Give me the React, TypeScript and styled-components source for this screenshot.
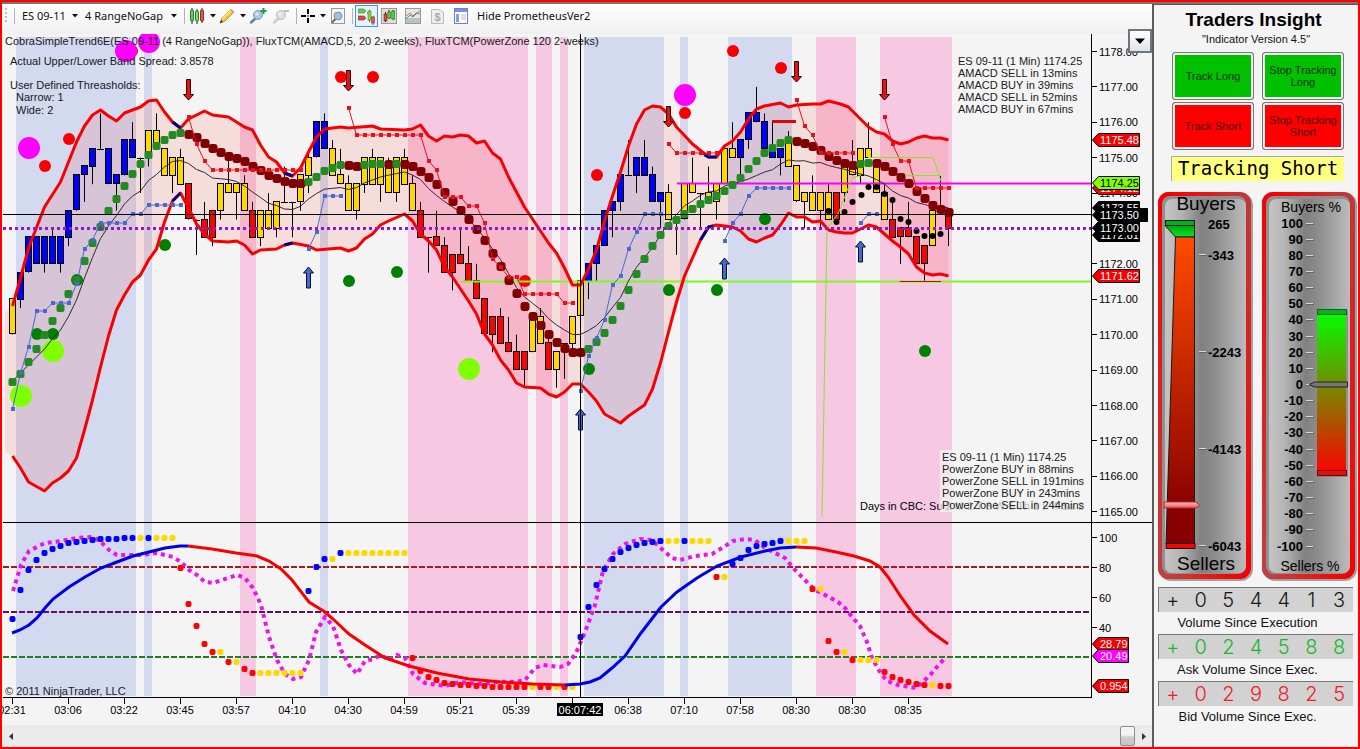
import React from 'react';
import styled, { createGlobalStyle } from 'styled-components';

const SANS = '"Liberation Sans", Arial, sans-serif';
const UI = '"Noto Sans", "Open Sans", sans-serif';

const GlobalStyle = createGlobalStyle`
  *, *::before, *::after { box-sizing: border-box; }
  body { margin: 0; background: #f4f4f4; font-family: ${SANS}; color: #111; }
  button, select { font: inherit; color: inherit; }
`;

/* ---------- page ---------- */

const Frame = styled.div`
  display: flex;
  flex-direction: column;
  border: 2px solid #f00;
`;
const TopEdge = styled.div`
  height: 2px;
  background: #7c7474;
`;
const Columns = styled.div`
  display: flex;
  align-items: stretch;
`;
const ChartColumn = styled.main`
  flex: 1;
  min-width: 0;
  display: flex;
  flex-direction: column;
`;

/* ---------- toolbar ---------- */

const Toolbar = styled.header`
  display: flex;
  align-items: center;
  height: 30px;
  padding: 0 0 6px 3px;
  background: linear-gradient(#fff, #f0f0f0);
  font: 11px/20px ${UI};
  white-space: nowrap;
`;
const Grip = styled.span`
  width: 2px;
  height: 16px;
  background: repeating-linear-gradient(#bbb 0 2px, transparent 2px 4px);
`;
const Divider = styled.span<{ $before: number; $after: number }>`
  width: 1px;
  height: 16px;
  margin: 0 ${(p) => p.$after}px 0 ${(p) => p.$before}px;
  background: #b4b4b4;
`;
const Picker = styled.label<{ $w: number }>`
  display: flex;
  align-items: center;
  width: ${(p) => p.$w}px;
  margin-right: 7px;
  select {
    appearance: none;
    flex: 1;
    min-width: 0;
    border: 0;
    padding: 0;
    background: none;
  }
`;
const ToolButton = styled.button<{ $active?: boolean; $gap?: number }>`
  display: flex;
  align-items: center;
  justify-content: center;
  gap: 5px;
  height: 22px;
  min-width: ${(p) => (p.$active ? 23 : 16)}px;
  margin-right: ${(p) => p.$gap ?? 8}px;
  padding: 0;
  border: ${(p) => (p.$active ? '1px solid #3c98e8' : '0')};
  background: ${(p) => (p.$active ? '#e4f1fc' : 'none')};
  svg { flex: none; }
`;

const Caret = () => (
  <svg width="6" height="4" viewBox="0 0 6 4" aria-hidden="true">
    <path d="M0 0h6L3 3.6z" fill="#111" />
  </svg>
);

const CandlesIcon = () => (
  <svg width="16" height="16" viewBox="0 0 16 16">
    <path d="M3 0v16M8 1v15M13 0v15" stroke="#222" />
    <rect x="1.500" y="2" width="3" height="11" rx="1" fill="#4ed64e" stroke="#14601a" strokeWidth=".8" />
    <rect x="6.500" y="3" width="3" height="10" rx="1" fill="#72e060" stroke="#14601a" strokeWidth=".8" />
    <rect x="11.500" y="2" width="3" height="11" rx="1" fill="#ee5448" stroke="#6e1410" strokeWidth=".8" />
  </svg>
);
const PencilIcon = () => (
  <svg width="16" height="16" viewBox="0 0 16 16">
    <path d="M1 15l2-5 9-9 3 3-9 9z" fill="#f2cb3c" stroke="#a07818" strokeWidth=".8" />
    <path d="M3 10l9-9 1 1-9 9z" fill="#fbe88c" />
    <path d="M11 2l1.500-1 3 3-1.500 1z" fill="#e79a86" />
    <path d="M1 15l1-3 2 2z" fill="#333" />
  </svg>
);
const LensIcon = ({ sign, dim }: { sign: string; dim?: boolean }) => (
  <svg width="17" height="16" viewBox="0 0 17 16">
    <path d="M1 14.500L6 10" stroke={dim ? '#ccc' : '#66809c'} strokeWidth="2.500" strokeLinecap="round" />
    <circle cx="8" cy="7" r="4.500" fill={dim ? '#dedede' : '#a9c7e0'} stroke={dim ? '#bbb' : '#7d9cb8'} />
    <circle cx="7" cy="6" r="1.800" fill={dim ? '#eee' : '#d8e9f5'} />
    {sign === '+' ? (
      <path d="M13.500 0v6M10.500 3h6" stroke="#14a050" strokeWidth="2" />
    ) : (
      <path d="M11 3h5" stroke="#aaa" strokeWidth="1.500" />
    )}
  </svg>
);
const CrosshairIcon = () => (
  <svg width="14" height="14" viewBox="0 0 14 14">
    <path d="M7 0v5M7 9v5M0 7h5M9 7h5M6.500 7h1" stroke="#000" strokeWidth="2" />
  </svg>
);
const PageLensIcon = () => (
  <svg width="16" height="16" viewBox="0 0 16 16">
    <rect x="1.500" y=".5" width="13" height="15" fill="#f4f4f4" stroke="#999" />
    <path d="M2 14.500l4-4" stroke="#666" strokeWidth="2" />
    <circle cx="8" cy="8" r="4" fill="#9fc0dc" stroke="#7796b0" />
  </svg>
);
const TraderIcon = () => (
  <svg width="17" height="17" viewBox="0 0 17 17">
    <path d="M0 1h6l2 2-2 2H0z" fill="#63cf4a" stroke="#3b8f2a" strokeWidth=".6" />
    <path d="M0 8h6l2 2-2 2H0z" fill="#d94b42" stroke="#8f2a24" strokeWidth=".6" />
    <path d="M11.500 2v12M9 5h2M15 8v9" stroke="#555" />
    <rect x="10" y="3" width="3" height="9" fill="#7edb3c" stroke="#3b8f2a" strokeWidth=".6" />
    <rect x="13.500" y="9" width="3" height="6" fill="#e05a50" stroke="#8f2a24" strokeWidth=".6" />
  </svg>
);
const BarsIcon = () => (
  <svg width="16" height="16" viewBox="0 0 16 16">
    <rect x=".5" y=".5" width="15" height="15" fill="#ddd" stroke="#999" />
    <path d="M4.500 4v10M8 2v9M12 2v10" stroke="#222" />
    <rect x="3" y="6" width="3" height="7" fill="#e04238" stroke="#611" strokeWidth=".5" />
    <rect x="6.800" y="4" width="3" height="6" fill="#54d03a" stroke="#161" strokeWidth=".5" />
    <rect x="10.800" y="3" width="3" height="8" fill="#54d03a" stroke="#161" strokeWidth=".5" />
  </svg>
);
const LinesIcon = () => (
  <svg width="16" height="16" viewBox="0 0 16 16">
    <rect x=".5" y=".5" width="15" height="15" fill="#e2e6e6" stroke="#999" />
    <rect x="1" y="10" width="14" height="5" fill="#bcc2c4" />
    <path d="M1 8l4-3 3 3 3-3 4 1" stroke="#d66" fill="none" />
    <path d="M1 11l4-4 3 2 4-4 3-2" stroke="#4a9a7a" fill="none" />
  </svg>
);
const DollarIcon = () => (
  <svg width="13" height="15" viewBox="0 0 13 15">
    <path d="M.5.500h8l4 3v11h-12z" fill="#eee" stroke="#bbb" />
    <text x="6.500" y="12" textAnchor="middle" fontFamily="Liberation Sans" fontWeight="700" fontSize="11" fill="#aaa">$</text>
  </svg>
);
const PropsIcon = () => (
  <svg width="14" height="16" viewBox="0 0 14 16">
    <rect x=".5" y=".5" width="13" height="15" fill="#fff" stroke="#6a80c8" />
    <rect x="1" y="1" width="12" height="3" fill="#7a90e0" />
    <rect x="2" y="6" width="3" height="8" fill="#8c9ce0" />
    <path d="M7 7h5M7 9h5M7 11h5" stroke="#bbc" />
  </svg>
);

/* ---------- chart data ---------- */

const xAt = (i: number) => 12.5 + 8 * i;
const tickY = (k: number) => 51.5 + 8.846 * k;

// [colour, high, top, bottom, low] in quarter-point ticks below 1178.00
type Candle = [string, number, number, number, number];
const candles: Candle[] = (
  'Y28,28,32,32 B25,25,28,29 B21,21,25,25 B21,21,24,24 B21,21,24,25 B20,21,24,24 B21,21,24,25 B18,18,21,22 B14,14,18,18 B13,13,14,17 ' +
  'B11,11,13,15 B7,11,11,11 B11,11,15,15 B14,14,15,18 B10,10,14,14 B8,10,12,12 B12,12,12,16 Y9,9,12,13 Y7,9,11,11 Y11,11,14,14 ' +
  'Y12,12,14,16 Y11,12,15,15 R15,15,19,19 R19,19,19,23 R17,19,21,21 R18,18,21,22 Y15,15,18,19 Y12,15,16,16 Y15,15,16,19 Y14,15,18,18 ' +
  'R17,18,21,21 Y18,18,21,22 Y16,18,20,20 Y17,17,20,21 Y13,17,17,17 Y17,17,17,21 Y14,14,17,18 Y11,12,14,16 B8,8,12,12 B7,8,11,11 ' +
  'Y10,11,14,14 Y11,14,15,15 Y14,15,18,18 Y15,15,18,19 Y12,12,15,16 Y11,12,15,15 Y12,12,15,17 Y12,13,16,16 Y12,12,16,17 Y11,12,15,15 ' +
  'Y14,15,18,18 R17,18,21,21 R21,21,21,25 R18,21,22,22 R21,22,25,25 R23,23,25,27 R20,23,24,24 R22,24,26,26 R24,26,28,28 R28,28,32,32 ' +
  'R30,30,32,34 R29,30,33,33 R30,33,34,34 R32,34,36,36 R34,34,36,38 Y30,30,34,34 Y29,30,33,33 R32,33,36,36 Y34,34,36,38 R33,33,33,37 ' +
  'Y30,30,33,34 Y26,26,30,30 B24,24,26,28 B22,22,24,26 B18,18,22,22 B17,17,18,21 B14,14,17,18 B10,14,14,14 B12,12,14,16 B10,12,14,14 ' +
  'B13,14,17,17 B16,16,17,20 Y15,16,19,19 Y19,19,19,23 Y15,15,19,19 Y12,15,16,16 Y16,16,16,20 Y13,16,17,17 Y15,15,17,19 Y11,11,15,15 ' +
  'Y8,11,12,12 B10,10,12,14 B7,7,10,11 B4,7,8,8 B7,8,11,11 B8,11,12,12 B11,11,12,14 Y9,10,13,13 Y13,13,17,17 Y16,16,17,20 ' +
  'Y14,16,18,18 Y16,16,18,20 Y15,16,19,19 R16,16,19,19 Y13,13,16,17 Y10,13,14,14 Y11,11,14,15 Y8,11,12,12 Y13,13,16,16 Y15,16,19,19 ' +
  'R17,19,21,21 R20,20,21,24 R17,20,21,21 R21,21,24,24 R22,22,24,26 Y18,18,22,22 R14,18,18,18 R18,18,20,22'
)
  .split(' ')
  .map((s) => [s[0], ...s.slice(1).split(',').map(Number)] as Candle);
const candleFill: Record<string, string> = { Y: '#ffd800', B: '#0202f4', R: '#f80404' };

const zones: [number, number, 'up' | 'down'][] = [
  [16, 136, 'up'], [144, 152, 'up'], [240, 256, 'down'], [320, 328, 'up'], [408, 528, 'down'], [536, 552, 'down'],
  [560, 568, 'down'], [584, 664, 'up'], [680, 688, 'up'], [728, 792, 'up'], [816, 856, 'down'], [880, 952, 'down'],
];

type Pt = [number, number];
const pts = (s: string): Pt[] => s.split(' ').map((p) => p.split(',').map(Number) as Pt);
const join = (p: Pt[]) => p.map((q) => q.join(',')).join(' ');

const upper = pts(
  '12.5,306 20.5,278 28.5,248 44.5,207 60.5,182 68.5,162 76.5,142 84.5,126 92.5,115 100.5,110 108.5,116 116.5,121 124.5,113 140.5,107 148.5,101 156.5,100 164.5,112 172.5,122 180.5,128 188.5,119 204.5,111 212.5,115 228.5,117 236.5,122 244.5,127 252.5,130 260.5,145 268.5,157 276.5,162 284.5,173 292.5,176 300.5,168 308.5,152 316.5,137 324.5,129 332.5,128 340.5,127 348.5,128 372.5,126 380.5,129 404.5,130 412.5,129 420.5,125 428.5,136 436.5,141 444.5,136 452.5,137 460.5,135 468.5,136 476.5,143 484.5,141 492.5,153 500.5,159 508.5,177 516.5,192 524.5,207 532.5,219 540.5,231 548.5,243 556.5,253 564.5,268 572.5,285 580.5,285 588.5,269 596.5,250 604.5,221 612.5,196 620.5,172 628.5,146 636.5,124 644.5,110 652.5,106 660.5,107 668.5,114 676.5,127 692.5,144 708.5,157 716.5,157 724.5,146 732.5,141 740.5,132 748.5,119 756.5,109 764.5,106 780.5,103 788.5,107 796.5,105 812.5,104 820.5,104 828.5,101 840.5,104 848.5,107 858.5,117 868.5,127 876.5,132 884.5,134 892.5,141 900.5,144 908.5,142 916.5,138 924.5,136 932.5,138 940.5,138 948.5,140'
);
const lower = pts(
  '12.5,456 20.5,468 28.5,482 44.5,491 52.5,483 60.5,478 68.5,471 76.5,458 84.5,430 92.5,400 100.5,367 108.5,336 116.5,310 124.5,295 132.5,282 140.5,275 148.5,260 156.5,249 164.5,222 172.5,201 180.5,193 188.5,208 196.5,224 204.5,234 212.5,241 228.5,242 236.5,241 244.5,245 252.5,254 260.5,250 276.5,249 284.5,245 292.5,243 308.5,246 316.5,250 340.5,248 348.5,251 356.5,248 364.5,239 372.5,234 380.5,225 388.5,221 404.5,214 412.5,221 420.5,234 428.5,241 436.5,250 444.5,267 452.5,277 460.5,289 468.5,301 476.5,314 484.5,334 492.5,345 500.5,360 508.5,370 516.5,383 524.5,387 540.5,388 548.5,394 556.5,397 564.5,392 572.5,384 580.5,384 588.5,392 596.5,401 604.5,414 620.5,423 628.5,416 644.5,405 652.5,389 660.5,363 668.5,332 676.5,302 684.5,276 692.5,258 700.5,240 708.5,227 716.5,225 732.5,227 740.5,231 748.5,239 756.5,242 764.5,238 772.5,235 780.5,225 788.5,213 796.5,217 804.5,217 812.5,222 820.5,221 828.5,230 836.5,232 844.5,233 852.5,233 860.5,229 868.5,225 876.5,227 892.5,241 900.5,247 908.5,254 916.5,267 924.5,273 932.5,275 940.5,274 948.5,276'
);
const valueAt = (line: Pt[], x: number) => {
  const n = line.findIndex((p) => p[0] >= x);
  if (n <= 0) return line[0][1];
  const [a, b] = [line[n - 1], line[n]];
  return a[1] + ((b[1] - a[1]) * (x - a[0])) / (b[0] - a[0]);
};
const middle: Pt[] = candles.map((_, i) => [xAt(i), (valueAt(upper, xAt(i)) + valueAt(lower, xAt(i))) / 2]);

const trend =
  'G382 374 362 349 335 321 308 294 280 261 243 227 211 199 186 174 164 155 146 140 135 133 D134 137 143 148 152 156 158 161 166 170 175 178 181 183 183 G182 177 171 168 165 D165 166 G165 164 164 D164 G164 D164 166 171 177 184 192 201 210 219 229 240 253 266 280 293 306 316 325 334 342 348 352 352 G349 342 333 320 306 290 274 259 246 235 226 220 214 209 204 200 196 191 185 178 169 161 153 148 143 140 D141 143 146 150 156 160 163 165 G164 163 D163 166 171 177 183 191 198 205 209 212';
const series = (s: string) => {
  let c = '';
  return s.split(' ').map((t) => {
    if (/[A-Z]/.test(t[0])) {
      c = t[0];
      return { c, y: Number(t.slice(1)) };
    }
    return { c, y: Number(t) };
  });
};

// [first bar, y of each bar]
const sellStops: [number, number[]][] = [
  [22, [117, 144, 161, 170, 170, 170, 170, 170, 170, 170, 170, 170, 170, 170, 170]],
  [42, [108, 135, 135, 135, 135, 135, 135, 135, 135, 135, 161, 170, 197, 197, 197, 206, 206, 223, 259, 267, 277, 277, 294, 294, 294, 294, 294, 303, 303]],
  [82, [144, 153, 153, 153, 153, 153, 153]],
  [98, [100, 126, 135, 153, 153, 153, 153, 153]],
  [109, [117, 144, 161, 161, 188, 188, 188, 188, 188]],
];
const buyStops: [number, number[]][] = [
  [0, [409, 373, 347, 311, 311, 303, 303, 303, 284, 249, 240, 223, 223, 223, 223, 214, 214, 205, 205, 205, 205, 205]],
  [37, [249, 232, 196, 196, 196]],
  [71, [391, 356, 338, 320, 285, 276, 249, 232, 214, 214, 214]],
  [89, [241, 223, 214, 196, 188, 188, 188, 188, 188]],
  [106, [223, 214, 214]],
];

const signals: [string, number, Pt[]][] = [
  ['#7fff00', 11, [[21, 396], [53, 351], [469, 369]]],
  ['#f80000', 6, [[69, 139], [45, 166], [132, 51], [341, 77], [373, 77], [597, 175], [525, 281], [733, 51], [781, 68], [685, 113]]],
  ['#ff00ff', 11, [[29, 148], [126, 51], [149, 42], [685, 95]]],
  ['#008000', 6, [[77, 280], [37, 334], [53, 334], [165, 245], [349, 281], [397, 272], [589, 369], [765, 219], [669, 290], [717, 290], [925, 351]]],
];
const blackDots = pts('828,211 836,222 844,212 852,202 861,195 868,187 876,187 884,194 892,200 900,219 908,222 916,231 924,236 932,236 940,234');
const sellArrows: Pt[] = [[188, 79], [348, 70], [668, 106], [796, 61], [884, 79]];
const buyArrows: Pt[] = [[308, 267], [580, 409], [724, 258], [860, 241]];

const oscillator =
  'B619 590 570 560 553 549 546 543 542 541 540 539 539 539 538 538 Y538 B538 Y538 538 538 R568 604 626 644 652 Y652 R662 Y662 R669 673 Y673 673 673 673 673 673 B591 567 559 Y559 B553 Y553 553 553 553 553 553 553 553 R658 671 677 680 683 684 685 685 686 686 687 687 687 687 687 Y687 R687 687 Y687 R687 Y687 B637 607 585 569 559 552 548 545 543 542 541 Y541 541 B541 Y541 541 541 R577 Y577 B564 558 550 546 544 543 541 Y541 541 541 R589 Y589 R641 652 Y652 R660 Y660 660 660 R672 677 680 682 684 685 Y685 R686 686';

const slow: [string, string][] = [
  ['#0000e8', '12,633 20,630 29,625 37,618 45,608 53,599 69,587 85,577 101,568 117,562 133,556 149,552 165,548 180,546 188,546'],
  ['#f80000', '188,546 212,549 236,553 257,556 269,561 281,569 292,580 309,602 325,612 333,619 349,634 365,645 385,658 409,666 437,673 469,679 501,682 533,684 565,685'],
  ['#0000e8', '565,685 580,684 590,682 600,678 612,668 625,656 641,633 661,607 677,592 697,578 717,566 741,557 765,551 780,548 796,547'],
  ['#f80000', '796,547 816,548 836,552 854,556 870,561 880,567 888,577 901,597 914,615 930,631 948,644'],
];
const fast =
  '13,591 21,565 29,551 45,543 61,541 77,538 93,537 101,542 109,550 117,555 140,555 157,553 173,557 181,562 189,570 197,575 205,582 213,583 237,575 245,578 253,588 261,605 269,637 277,660 285,674 293,679 301,677 309,660 316,632 325,617 333,626 341,650 349,665 357,674 365,661 373,659 381,655 389,660 397,655 405,658 413,674 425,683 445,686 460,682 480,684 498,682 515,682 525,680 535,668 543,665 560,667 568,664 576,653 585,632 595,605 603,571 613,554 625,544 640,539 652,540 664,551 672,558 680,560 695,556 712,554 722,548 733,541 745,539 755,540 765,548 775,553 785,558 795,570 805,580 815,590 829,597 838,602 845,608 853,618 860,626 867,642 872,658 880,672 887,681 898,685 916,688 925,680 932,673 940,663 946,658';

const times = ['02:31', '03:06', '03:22', '03:45', '03:57', '04:10', '04:30', '04:59', '05:21', '05:39', '', '06:38', '07:10', '07:58', '08:30', '08:30', '08:35'];

/* ---------- chart ---------- */

const ChartArea = styled.div`
  position: relative;
`;
const ChartSvg = styled.svg`
  display: block;
  width: 100%;
  height: auto;
  background: #f4f4f4;
  font: 11px ${SANS};
`;
const PanelToggle = styled.button`
  position: absolute;
  top: -5px;
  right: 0;
  display: flex;
  align-items: center;
  justify-content: center;
  width: 24px;
  height: 24px;
  padding: 0;
  border: 2px solid #70747c;
  background: linear-gradient(#fff, #e0e4e8);
`;

const Tag = ({ y, value, fill, color = '#fff', w = 47 }: { y: number; value: string; fill: string; color?: string; w?: number }) => (
  <g>
    <path d={`M1092.500 ${y}l6-6.500h${w - 6}v13h-${w - 6}z`} fill={fill} stroke="#000" />
    <text x="1100" y={y + 4} fill={color}>{value}</text>
  </g>
);

const Stops = ({ runs, color }: { runs: [number, number[]][]; color: string }) => (
  <>
    {runs.map(([start, ys]) => (
      <g key={start}>
        <polyline points={ys.map((y, n) => `${xAt(start + n)},${y}`).join(' ')} fill="none" stroke={color} />
        {ys.map((y, n) => (
          <rect key={n} x={xAt(start + n) - 1.5} y={y - 2} width="4" height="4" fill={color} />
        ))}
      </g>
    ))}
  </>
);

const Chart = () => (
  <ChartSvg viewBox="2 34 1150 691" role="img" aria-label="ES 09-11 price chart">
    <defs>
      <clipPath id="plot"><rect x="3" y="34" width="1089" height="664" /></clipPath>
    </defs>
    {zones.map(([a, b, kind]) => (
      <rect key={a} x={a} y="37" width={b - a} height="659" fill={kind === 'up' ? '#d3daf0' : '#f7c8e1'} />
    ))}

    <g clipPath="url(#plot)">
      <polygon points={`5,312 ${join(upper)} ${join([...lower].reverse())} 5,452`} fill="#ff1400" fillOpacity=".1" />

      {candles.map(([c, h, t, b, l], i) => {
        const x = xAt(i);
        return (
          <g key={i} stroke="#000">
            <path d={`M${x} ${tickY(h)}V${tickY(l)}`} />
            {t === b ? (
              <path d={`M${x - 3.5} ${Math.round(tickY(t)) + 0.5}h7`} />
            ) : (
              <rect x={x - 3} y={Math.round(tickY(t)) - 0.5} width="6" height={Math.round(tickY(b) - tickY(t))} fill={candleFill[c]} />
            )}
          </g>
        );
      })}

      {signals.map(([fill, r, list]) =>
        list.map(([x, y]) => <circle key={`${x}-${y}`} cx={x} cy={y} r={r} fill={fill} />)
      )}

      <path d="M677 183.500H1091" stroke="#f800f8" strokeWidth="2" />
      <path d="M461 281.500H1091" stroke="#80f820" strokeWidth="2" />
      <polyline points={join(middle)} fill="none" stroke="#302830" />

      <g fill="none" stroke="#f80000" strokeWidth="3" strokeLinejoin="round">
        <polyline points={join(upper)} />
        <polyline points={join(lower)} />
        <path d="M772 121.500H796" stroke="#d80808" />
      </g>
      <path
        d="M172.500 122L180.500 128M172.500 201L180.500 193M284.500 173L292.500 176M284.500 245L292.500 243M704.500 155L708.500 157H716.500M700.500 240L708.500 227L713 226"
        fill="none" stroke="#000080" strokeWidth="3"
      />
      <path d="M900 281.500H941" stroke="#b01010" />

      {series(trend).map(({ c, y }, i) =>
        c === 'G' ? (
          <rect key={i} x={xAt(i) - 4} y={y - 4} width="8" height="8" rx="2" fill="#228b22" />
        ) : (
          <rect key={i} x={xAt(i) - 4} y={y - 4} width="9" height="9" rx="3" fill="#800000" />
        )
      )}
      <Stops runs={sellStops} color="#e8101c" />
      <Stops runs={buyStops} color="#4c68cc" />
      {blackDots.map(([x, y]) => <circle key={x} cx={x + 0.5} cy={y} r="3" />)}
      <path d="M822 517L824 400L827 228L838 214L852 178L861 175.500M868 157.500H933L941 181M905 175.500H941" fill="none" stroke="#84e820" />

      {sellArrows.map(([x, y]) => (
        <path key={x} d={`M${x - 1.5} ${y + 0.5}h4v15h3l-5 5.500l-5-5.500h3z`} fill="#e81010" stroke="#200" />
      ))}
      {buyArrows.map(([x, y]) => (
        <path key={x} d={`M${x + 0.5} ${y}l5 6h-3v15h-4v-15h-3z`} fill="#4868c8" stroke="#001040" />
      ))}

      <path d="M3 567H1091" stroke="#a02020" strokeWidth="2" strokeDasharray="6 2" />
      <path d="M3 612H1091" stroke="#601060" strokeWidth="2" strokeDasharray="6 2" />
      <path d="M3 657H1091" stroke="#208020" strokeWidth="2" strokeDasharray="6 2" />
      <polyline points={fast} fill="none" stroke="#f010f0" strokeWidth="4" strokeDasharray="4 4" />
      {series(oscillator).map(({ c, y }, i) => (
        <rect key={i} x={xAt(i) - 3} y={y - 3} width="6" height="6" rx="2" fill={candleFill[c]} />
      ))}
      {slow.map(([c, p]) => <polyline key={p} points={p} fill="none" stroke={c} strokeWidth="3" />)}

      <g fill="#181820">
        <text x="5" y="45">CobraSimpleTrend6E(ES 09-11 (4 RangeNoGap)), FluxTCM(AMACD,5, 20 2-weeks), FluxTCM(PowerZone 120 2-weeks)</text>
        <text x="10" y="65">Actual Upper/Lower Band Spread: 3.8578</text>
        <text x="10" y="89">User Defined Threasholds:</text>
        <text x="16" y="101">Narrow: 1</text>
        <text x="16" y="114">Wide: 2</text>
      </g>

      <path d="M3 228.500H1091" stroke="#9018c8" strokeWidth="3" strokeDasharray="3 3" />
      <path d="M3 214.500H1091M580.500 34V697" stroke="#000" />
    </g>

    <g fill="#202020">
      {['ES 09-11 (1 Min) 1174.25', 'AMACD SELL in 13mins', 'AMACD BUY in 39mins', 'AMACD SELL in 52mins', 'AMACD BUY in 67mins'].map((t, n) => (
        <text key={t} x="958" y={65 + n * 12}>{t}</text>
      ))}
      <text x="860" y="510" fill="#000">Days in CBC: Su 2 M 2 T 3 W 5 Th 1 F 4 Sa 2</text>
      <rect x="940" y="450" width="148" height="62" fill="#f4f4f4" fillOpacity=".75" />
      {['ES 09-11 (1 Min) 1174.25', 'PowerZone BUY in 88mins', 'PowerZone SELL in 191mins', 'PowerZone BUY in 243mins', 'PowerZone SELL in 244mins'].map((t, n) => (
        <text key={t} x="942" y={461 + n * 12}>{t}</text>
      ))}
      <text x="5" y="695">© 2011 NinjaTrader, LLC</text>
    </g>

    <path d="M3 522.500H1152M3 697.500H1092M1091.500 34V698" stroke="#000" />
    {Array.from({ length: 14 }, (_, n) => (
      <g key={n}>
        <path d={`M1091 ${Math.round(51 + n * 35.4) + 0.5}h6`} stroke="#000" />
        <text x="1099" y={Math.round(55.5 + n * 35.4)}>{`${1178 - n}.00`}</text>
      </g>
    ))}
    {[100, 80, 60, 40].map((v, n) => (
      <g key={v}>
        <path d={`M1091 ${537.5 + n * 30}h6`} stroke="#000" />
        <text x="1099" y={542 + n * 30}>{v}</text>
      </g>
    ))}
    {times.map((t, n) => (
      <g key={n}>
        <path d={`M${12.5 + n * 56} 697v7`} stroke="#000" />
        <text x={12 + n * 56} y="714" textAnchor="middle">{t}</text>
      </g>
    ))}
    <rect x="557" y="703" width="46" height="13" />
    <text x="580" y="714" textAnchor="middle" fill="#fff">06:07:42</text>

    <Tag y={140} value="1175.48" fill="#f80000" />
    <Tag y={188} value="1174.12" fill="#f80000" />
    <Tag y={183} value="1174.25" fill="#7fff00" color="#000" />
    <Tag y={208} value="1173.55" fill="#000" />
    <Tag y={235} value="1172.81" fill="#000" />
    <Tag y={228} value="1173.00" fill="#000" />
    <Tag y={215} value="1173.50" fill="#000" w={55} />
    <Tag y={276} value="1171.62" fill="#f80000" />
    <Tag y={644} value="28.79" fill="#f80000" w={36} />
    <Tag y={656} value="20.49" fill="#ff00ff" w={36} />
    <Tag y={686} value="0.954" fill="#f80000" w={36} />
  </ChartSvg>
);

const ScrollTrack = styled.div`
  display: flex;
  align-items: center;
  height: 22px;
  background: #ebebeb;
`;
const ScrollArrow = styled.button`
  display: flex;
  align-items: center;
  justify-content: center;
  width: 17px;
  height: 22px;
  padding: 0;
  border: 0;
  background: none;
`;
const ScrollThumb = styled.div`
  width: 15px;
  height: 20px;
  margin-left: auto;
  border: 1px solid #8c8c8c;
  border-radius: 2px;
  background: linear-gradient(#f4f4f4 45%, #cfcfcf 55%, #c4c4c4);
`;

/* ---------- side panel ---------- */

const Side = styled.aside`
  width: 206px;
  flex: none;
  display: flex;
  flex-direction: column;
  padding-top: 4px;
  border-top: 1px solid #555;
  border-left: 2px solid #5c5c58;
`;
const Title = styled.h1`
  margin: 0;
  padding-right: 5px;
  font: 700 19px/22px ${SANS};
  text-align: center;
  color: #000;
`;
const Subtitle = styled.p`
  margin: 0 0 5px;
  font: 11px/16px ${SANS};
  text-align: center;
`;
const TrackGrid = styled.div`
  display: grid;
  grid-template-columns: 1fr 1fr;
  grid-auto-rows: 48px;
  gap: 2px 8px;
  margin: 0 14px 6px 18px;
`;
const TrackButton = styled.button<{ $tone: 'long' | 'short' }>`
  padding: 0 4px;
  border: 1px solid #777;
  border-radius: 3px;
  box-shadow: inset 0 0 0 2px #f2f2f2;
  background: ${(p) => (p.$tone === 'long' ? '#00c000' : '#ff0000')};
  color: ${(p) => (p.$tone === 'long' ? '#043004' : '#480000')};
  font: 11px/12px ${SANS};
`;
const Status = styled.output`
  display: block;
  height: 25px;
  margin: 0 14px 9px 17px;
  border-top: 1px solid #aaa;
  border-left: 1px solid #aaa;
  background: #ffff80;
  color: #000;
  font: 19px/23px "DejaVu Sans Mono", monospace;
  text-align: center;
  white-space: nowrap;
`;
const Gauges = styled.div`
  display: flex;
  gap: 6px;
  padding-left: 2px;
  margin-bottom: 5px;
`;
const GaugeSvg = styled.svg`
  display: block;
  flex: 1;
  min-width: 0;
  height: auto;
  font: 700 13px ${SANS};
`;
const Counter = styled.section`
  display: flex;
  flex-direction: column-reverse;
  margin: 0 5px 0 4px;
`;
const CounterName = styled.h2`
  margin: 0;
  padding-right: 16px;
  font: 13px/22px ${SANS};
  text-align: center;
`;
const Display = styled.div<{ $color: string }>`
  display: grid;
  grid-template-columns: repeat(7, 1fr);
  height: 25px;
  border-top: 1px solid #777;
  border-left: 1px solid #777;
  background: #d2d2d2;
  color: ${(p) => p.$color};
  font: 300 20px/24px Inter, ${SANS};
  text-align: center;
`;

const GaugeShell = ({ x, id }: { x: number; id: string }) => (
  <>
    <defs>
      <linearGradient id={`${id}l`} x1="0" y1="0" x2="0" y2="1">
        <stop offset="0" stopColor="#f80000" /><stop offset="1" stopColor="#c04040" />
      </linearGradient>
      <linearGradient id={`${id}r`} x1="0" y1="0" x2="0" y2="1">
        <stop offset="0" stopColor="#c03838" /><stop offset="1" stopColor="#f80000" />
      </linearGradient>
      <linearGradient id={`${id}fade`}>
        <stop offset=".15" stopColor="#fff" /><stop offset=".85" stopColor="#000" />
      </linearGradient>
      <mask id={`${id}m`}><rect x={x} y="190" width="98" height="392" fill={`url(#${id}fade)`} /></mask>
      <linearGradient id={`${id}g`}>
        <stop offset="0" stopColor="#c4c4c4" /><stop offset=".2" stopColor="#b4b4b4" />
        <stop offset=".45" stopColor="#808080" /><stop offset=".6" stopColor="#8c8c8c" /><stop offset="1" stopColor="#bcbcbc" />
      </linearGradient>
    </defs>
    <rect x={x + 3} y="193" width="94" height="388" rx="12" fill="#a4a0a0" />
    <rect x={x + 2} y="192" width="93" height="387" rx="11" fill={`url(#${id}r)`} />
    <rect x={x + 2} y="192" width="93" height="387" rx="11" fill={`url(#${id}l)`} mask={`url(#${id}m)`} />
    <rect x={x + 6} y="196" width="84" height="378" rx="8" fill="#909090" />
    <rect x={x + 9} y="199" width="81" height="374" rx="7" fill={`url(#${id}g)`} />
  </>
);

const GaugeTick = ({ x, y }: { x: number; y: number }) => (
  <>
    <path d={`M${x} ${y + 1.5}h8`} stroke="#666" />
    <path d={`M${x} ${y + 0.5}h7`} stroke="#d8d8d8" />
  </>
);

const PressureGauge = () => (
  <GaugeSvg viewBox="1156 190 98 392" role="img" aria-label="Buyers and sellers">
    <GaugeShell x={1156} id="p" />
    <defs>
      <linearGradient id="heat" x1="0" y1="0" x2="0" y2="1"><stop offset="0" stopColor="#ff4a00" /><stop offset=".9" stopColor="#880000" /></linearGradient>
      <linearGradient id="rise" x1="0" y1="0" x2="0" y2="1"><stop offset="0" stopColor="#00a810" /><stop offset="1" stopColor="#00e820" /></linearGradient>
      <linearGradient id="pin" x1="0" y1="0" x2="0" y2="1"><stop offset="0" stopColor="#ffc0c0" /><stop offset="1" stopColor="#f05050" /></linearGradient>
    </defs>
    <g stroke="#181818">
      <path d="M1165 225.500H1194.500V237H1175.500z" fill="url(#rise)" />
      <rect x="1165.500" y="220.500" width="29" height="5" fill="#00b020" />
      <path d="M1175.500 237H1194.500V544H1166z" fill="url(#heat)" />
      <rect x="1166" y="543.500" width="29" height="5" fill="#f00808" />
      <path d="M1164 502H1196L1200 505.500L1196 508H1164z" fill="url(#pin)" stroke="#a03030" />
    </g>
    <text x="1206" y="210" textAnchor="middle" fontSize="19" fontWeight="400">Buyers</text>
    <text x="1206" y="570" textAnchor="middle" fontSize="19" fontWeight="400">Sellers</text>
    <text x="1208" y="229">265</text>
    {([[255, '-343'], [352, '-2243'], [449, '-4143'], [546, '-6043']] as [number, string][]).map(([y, t]) => (
      <g key={t}>
        <GaugeTick x={1199} y={y - 1} />
        <text x="1208" y={y + 5}>{t}</text>
      </g>
    ))}
  </GaugeSvg>
);

const PercentGauge = () => (
  <GaugeSvg viewBox="1260 190 98 392" role="img" aria-label="Buyers and sellers percent">
    <GaugeShell x={1260} id="q" />
    <defs>
      <linearGradient id="mix" x1="0" y1="0" x2="0" y2="1"><stop offset="0" stopColor="#00ff00" /><stop offset=".5" stopColor="#808000" /><stop offset="1" stopColor="#ff0000" /></linearGradient>
    </defs>
    <text x="1311" y="212" textAnchor="middle" fontSize="14" fontWeight="400">Buyers %</text>
    <text x="1310" y="571" textAnchor="middle" fontSize="14" fontWeight="400">Sellers %</text>
    {Array.from({ length: 21 }, (_, n) => {
      const y = Math.round(223.5 + n * 16.15);
      return (
        <g key={n}>
          <GaugeTick x={1306} y={y - 1} />
          <text x="1303" y={y + 4} textAnchor="end">{100 - n * 10}</text>
        </g>
      );
    })}
    <rect x="1318" y="310" width="30" height="167" fill="#777" fillOpacity=".6" />
    <rect x="1317" y="312" width="29" height="162" fill="url(#mix)" />
    <rect x="1317.500" y="309.500" width="29" height="5" fill="#10b010" stroke="#063" />
    <rect x="1317.500" y="470.500" width="29" height="5" fill="#e01010" stroke="#700" />
    <path d="M1309.500 384.500l5-2.500h33v5h-33z" fill="#777" stroke="#222" />
  </GaugeSvg>
);

const counters = [
  { name: 'Volume Since Execution', value: '+054413', color: '#181818' },
  { name: 'Ask Volume Since Exec.', value: '+024588', color: '#18b828' },
  { name: 'Bid Volume Since Exec.', value: '+029825', color: '#f02020' },
];

export default function App() {
  return (
    <>
      <GlobalStyle />
      <Frame>
        <TopEdge />
        <Columns>
          <ChartColumn>
            <Toolbar>
              <Grip />
              <Divider $before={7} $after={7} />
              <Picker $w={56}>
                <select aria-label="Instrument" defaultValue="ES 09-11"><option>ES 09-11</option></select>
                <Caret />
              </Picker>
              <Picker $w={92}>
                <select aria-label="Interval" defaultValue="4 RangeNoGap"><option>4 RangeNoGap</option></select>
                <Caret />
              </Picker>
              <Divider $before={0} $after={4} />
              <ToolButton aria-label="Chart style" $gap={3}><CandlesIcon /><Caret /></ToolButton>
              <ToolButton aria-label="Drawing tools" $gap={4}><PencilIcon /><Caret /></ToolButton>
              <ToolButton aria-label="Zoom in" $gap={6}><LensIcon sign="+" /></ToolButton>
              <ToolButton aria-label="Zoom out" $gap={0}><LensIcon sign="-" dim /></ToolButton>
              <Divider $before={6} $after={4} />
              <ToolButton aria-label="Cursor" $gap={4}><CrosshairIcon /><Caret /></ToolButton>
              <ToolButton aria-label="Data box" $gap={0}><PageLensIcon /></ToolButton>
              <Divider $before={6} $after={2} />
              <ToolButton aria-label="Chart trader" $active $gap={3}><TraderIcon /></ToolButton>
              <ToolButton aria-label="Data series"><BarsIcon /></ToolButton>
              <ToolButton aria-label="Indicators"><LinesIcon /></ToolButton>
              <ToolButton aria-label="Strategies"><DollarIcon /></ToolButton>
              <ToolButton aria-label="Properties"><PropsIcon /></ToolButton>
              <ToolButton>Hide PrometheusVer2</ToolButton>
            </Toolbar>
            <ChartArea>
              <Chart />
              <PanelToggle aria-label="Show panel">
                <svg width="10" height="6" viewBox="0 0 10 6"><path d="M0 .500h10L5 6z" /></svg>
              </PanelToggle>
            </ChartArea>
            <ScrollTrack>
              <ScrollArrow aria-label="Scroll left">
                <svg width="4" height="7" viewBox="0 0 4 7"><path d="M4 0v7L0 3.500z" fill="#333" /></svg>
              </ScrollArrow>
              <ScrollThumb />
              <ScrollArrow aria-label="Scroll right">
                <svg width="4" height="7" viewBox="0 0 4 7"><path d="M0 0v7l4-3.500z" fill="#333" /></svg>
              </ScrollArrow>
            </ScrollTrack>
          </ChartColumn>

          <Side>
            <Title>Traders Insight</Title>
            <Subtitle>"Indicator Version 4.5"</Subtitle>
            <TrackGrid>
              <TrackButton $tone="long">Track Long</TrackButton>
              <TrackButton $tone="long">Stop Tracking Long</TrackButton>
              <TrackButton $tone="short">Track Short</TrackButton>
              <TrackButton $tone="short">Stop Tracking Short</TrackButton>
            </TrackGrid>
            <Status>Tracking Short</Status>
            <Gauges>
              <PressureGauge />
              <PercentGauge />
            </Gauges>
            {counters.map((c) => (
              <Counter key={c.name}>
                <CounterName>{c.name}</CounterName>
                <Display $color={c.color}>
                  {c.value.split('').map((d, n) => <span key={n}>{d}</span>)}
                </Display>
              </Counter>
            ))}
          </Side>
        </Columns>
      </Frame>
    </>
  );
}
